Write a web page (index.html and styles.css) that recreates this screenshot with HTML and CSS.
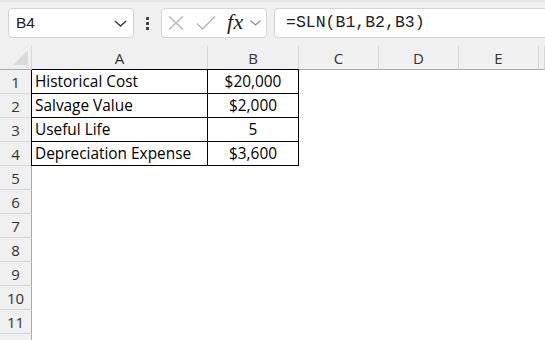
FILE: index.html
```html
<!DOCTYPE html>
<html lang="en">
<head>
    <meta charset="UTF-8">
    <title>Sheet</title>
    <link rel="stylesheet" href="styles.css">
</head>
<body>
    <div class="toolbar">
        <div class="namebox">
            <span>B4</span>
            <svg class="chev" width="13" height="7" viewBox="0 0 13 7"><path d="M1 1 L6.5 6 L12 1" fill="none" stroke="#333" stroke-width="1.3"/></svg>
        </div>
        <div class="dots"><i></i><i></i><i></i></div>
        <div class="fxbox">
            <svg width="16" height="14" viewBox="0 0 16 14"><path d="M1 0.5 L15 13.5 M15 0.5 L1 13.5" stroke="#b4b4b4" stroke-width="1.3" fill="none"/></svg>
            <svg width="20" height="14" viewBox="0 0 20 14"><path d="M1 7.5 L6.5 13 L19 0.5" stroke="#b4b4b4" stroke-width="1.3" fill="none"/></svg>
            <span class="fx">fx</span>
            <svg width="11" height="6" viewBox="0 0 11 6"><path d="M0.5 0.5 L5.5 5 L10.5 0.5" fill="none" stroke="#888" stroke-width="1.1"/></svg>
        </div>
        <div class="formula">=SLN(B1,B2,B3)</div>
    </div>

    <div class="sheet">
        <div class="corner"><span class="tri"></span></div>
        <div class="colhead">A</div>
        <div class="colhead">B</div>
        <div class="colhead">C</div>
        <div class="colhead">D</div>
        <div class="colhead">E</div>
        <div class="colhead"></div>

        <div class="rowhead">1</div>
        <div class="cell t a top">Historical Cost</div>
        <div class="cell t b top">$20,000</div>
        <div class="cell"></div><div class="cell"></div><div class="cell"></div><div class="cell"></div>

        <div class="rowhead">2</div>
        <div class="cell t a">Salvage Value</div>
        <div class="cell t b">$2,000</div>
        <div class="cell"></div><div class="cell"></div><div class="cell"></div><div class="cell"></div>

        <div class="rowhead">3</div>
        <div class="cell t a">Useful Life</div>
        <div class="cell t b">5</div>
        <div class="cell"></div><div class="cell"></div><div class="cell"></div><div class="cell"></div>

        <div class="rowhead">4</div>
        <div class="cell t a">Depreciation Expense</div>
        <div class="cell t b">$3,600</div>
        <div class="cell"></div><div class="cell"></div><div class="cell"></div><div class="cell"></div>

        <div class="rowhead">5</div><div class="cell wide"></div>
        <div class="rowhead">6</div><div class="cell wide"></div>
        <div class="rowhead">7</div><div class="cell wide"></div>
        <div class="rowhead">8</div><div class="cell wide"></div>
        <div class="rowhead">9</div><div class="cell wide"></div>
        <div class="rowhead">10</div><div class="cell wide"></div>
        <div class="rowhead">11</div><div class="cell wide"></div>
        <div class="rowhead"></div><div class="cell wide"></div>
    </div>
</body>
</html>
```

FILE: styles.css
```css
body {
    margin: 0;
    padding: 0;
    background-color: #f0f0f0;
    font-family: "Open Sans", "Liberation Sans", sans-serif;
    color: #000;
    width: 545px;
    height: 340px;
    overflow: hidden;
}

.toolbar {
    height: 46px;
    display: flex;
    align-items: flex-start;
    padding: 6px 0 0 8px;
    box-sizing: border-box;
    border-top: 2px solid #e6e6e6;
}

.namebox {
    width: 126px;
    height: 30px;
    box-sizing: border-box;
    background-color: white;
    border: 1px solid #d4d4d4;
    border-radius: 4px;
    display: flex;
    align-items: center;
    justify-content: space-between;
    padding: 0 6px 0 7px;
    font-family: "Liberation Sans", sans-serif;
    font-size: 15.5px;
    color: #222;
}

.chev {
    margin-top: 1px;
}

.dots {
    width: 27px;
    height: 30px;
    display: flex;
    flex-direction: column;
    align-items: center;
    justify-content: center;
    gap: 2px;
}

.dots i {
    width: 3px;
    height: 3px;
    background-color: #444;
}

.fxbox {
    width: 106px;
    height: 30px;
    box-sizing: border-box;
    background-color: white;
    border: 1px solid #d4d4d4;
    border-radius: 4px;
    display: flex;
    align-items: center;
    padding: 0 0 0 6px;
}

.fxbox svg:nth-child(2) {
    margin-left: 12px;
}

.fx {
    font-family: "Liberation Serif", serif;
    font-style: italic;
    font-size: 22px;
    color: #222;
    margin-left: 11px;
    margin-top: -3px;
    letter-spacing: 0.5px;
}

.fxbox svg:last-child {
    margin-left: 6px;
}

.formula {
    flex: 1;
    margin-left: 7px;
    height: 30px;
    box-sizing: border-box;
    background-color: white;
    border: 1px solid #d4d4d4;
    border-right: none;
    border-radius: 4px 0 0 4px;
    padding: 0 0 0 11px;
    font-family: "Liberation Mono", monospace;
    font-size: 16.5px;
    line-height: 28px;
    color: #222;
}

.sheet {
    display: grid;
    grid-template-columns: 32px 176px 91px 80px 80px 80px 1fr;
    grid-auto-rows: 24px;
    background-color: white;
}

.corner,
.colhead {
    background-color: #f0f0f0;
    border-bottom: 1px solid #a9a9a9;
    box-sizing: border-box;
}

.corner {
    border-right: 1px solid #d6d6d6;
    position: relative;
}

.tri {
    position: absolute;
    left: 13px;
    top: 4px;
    width: 0;
    height: 0;
    border-left: 15px solid transparent;
    border-bottom: 15px solid #dadada;
}

.colhead {
    border-right: 1px solid #d6d6d6;
    text-align: center;
    font-size: 15px;
    line-height: 24px;
    color: #333;
}

.rowhead {
    background-color: #f0f0f0;
    border-right: 1px solid #a9a9a9;
    border-bottom: 1px solid #d6d6d6;
    box-sizing: border-box;
    text-align: center;
    font-size: 15px;
    line-height: 24px;
    color: #333;
}

.cell {
    box-sizing: border-box;
    font-size: 15.4px;
    line-height: 23px;
    white-space: nowrap;
}

.wide {
    grid-column: 2 / -1;
}

.t {
    border-right: 1px solid #000;
    border-bottom: 1px solid #000;
}

.a {
    padding-left: 3px;
    box-shadow: -1px 0 0 #000;
}

.b {
    text-align: center;
}

.top {
    box-shadow: 0 -1px 0 #000;
}

.a.top {
    box-shadow: -1px 0 0 #000, 0 -1px 0 #000, -1px -1px 0 #000;
}
```
